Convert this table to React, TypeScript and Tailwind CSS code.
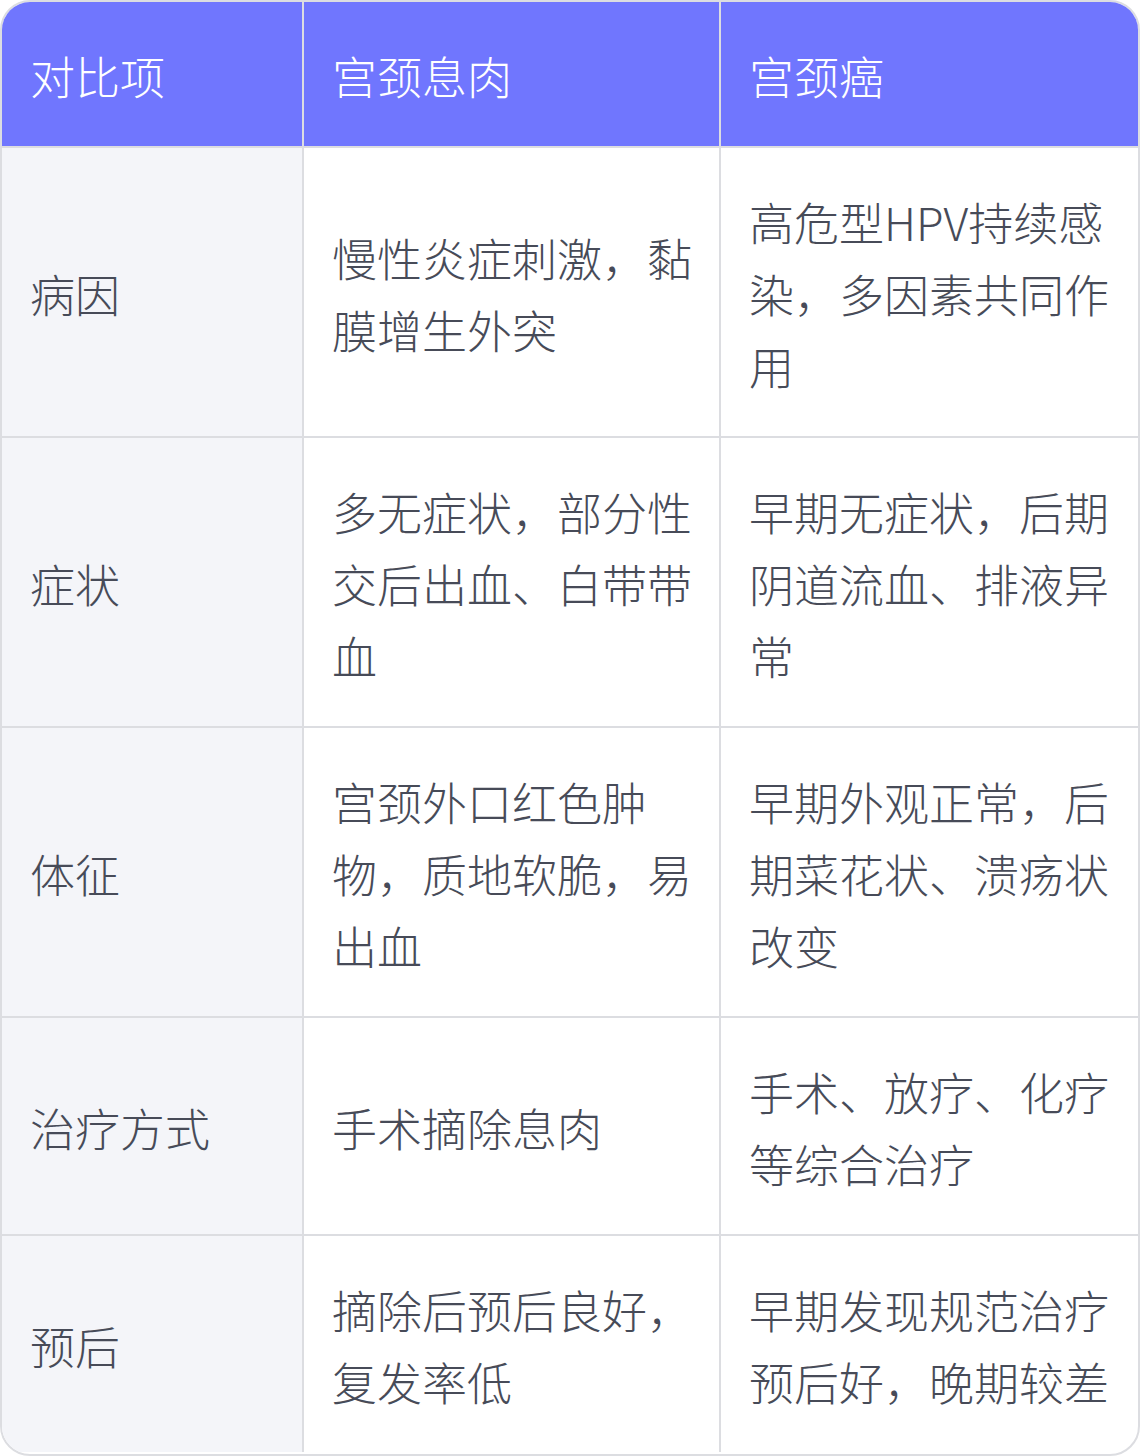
import React from 'react';

type Row = { item: string; polyp: string; cancer: string };

const rows: Row[] = [
  { item: '病因', polyp: '慢性炎症刺激，黏膜增生外突', cancer: '高危型HPV持续感染，多因素共同作用' },
  { item: '症状', polyp: '多无症状，部分性交后出血、白带带血', cancer: '早期无症状，后期阴道流血、排液异常' },
  { item: '体征', polyp: '宫颈外口红色肿物，质地软脆，易出血', cancer: '早期外观正常，后期菜花状、溃疡状改变' },
  { item: '治疗方式', polyp: '手术摘除息肉', cancer: '手术、放疗、化疗等综合治疗' },
  { item: '预后', polyp: '摘除后预后良好，复发率低', cancer: '早期发现规范治疗预后好，晚期较差' },
];

const cell = 'pl-[28px] pr-[12px] pt-[38px] pb-[34px] align-middle border-[#dcdde1]';

const App: React.FC = () => {
  return (
    <div
      className="w-[1140px] h-[1456px] bg-white"
      style={{ fontFamily: '"Noto Sans CJK SC", "Noto Sans", sans-serif' }}
    >
      <div className="w-full h-full rounded-[30px] border-2 border-[#dcdde1] overflow-hidden">
        <table className="w-full border-collapse table-fixed text-[45px] leading-[72px] font-light text-[#474b58]">
          <colgroup>
            <col className="w-[301px]" />
            <col className="w-[417px]" />
            <col />
          </colgroup>
          <thead>
            <tr className="bg-[#7076fe] text-white">
              <th className={`${cell} text-left font-light border-b-2 border-r-2`}>对比项</th>
              <th className={`${cell} text-left font-light border-b-2 border-r-2`}>宫颈息肉</th>
              <th className={`${cell} text-left font-light border-b-2`}>宫颈癌</th>
            </tr>
          </thead>
          <tbody>
            {rows.map((r, i) => (
              <tr key={r.item}>
                <td className={`${cell} bg-[#f4f5f9] border-r-2 ${i < rows.length - 1 ? 'border-b-2' : ''}`}>{r.item}</td>
                <td className={`${cell} border-r-2 ${i < rows.length - 1 ? 'border-b-2' : ''}`}>{r.polyp}</td>
                <td className={`${cell} ${i < rows.length - 1 ? 'border-b-2' : ''}`}>{r.cancer}</td>
              </tr>
            ))}
          </tbody>
        </table>
      </div>
    </div>
  );
};

export default App;
